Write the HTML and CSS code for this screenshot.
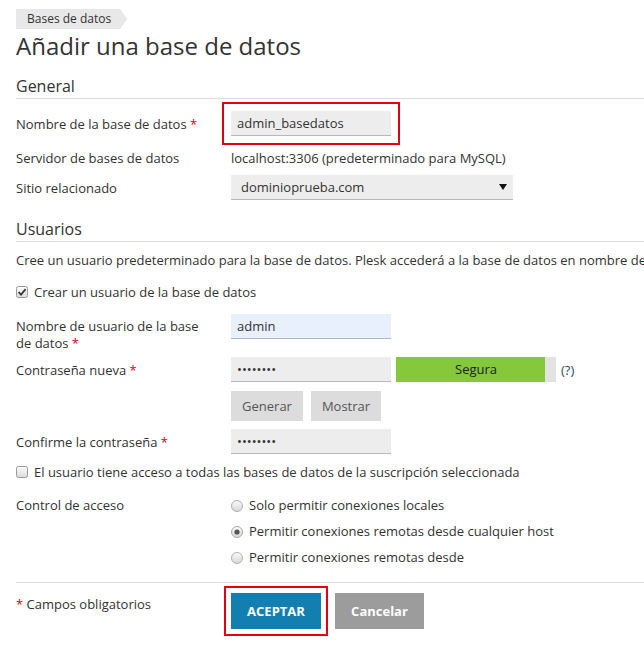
FILE: index.html
```html
<!DOCTYPE html>
<html lang="es">
<head>
<meta charset="utf-8">
<title>Añadir una base de datos</title>
<link rel="stylesheet" href="styles.css">
</head>
<body>
<div class="page">
  <nav class="crumbs"><span class="crumb">Bases de datos</span></nav>
  <h1 class="title">Añadir una base de datos</h1>

  <section class="section">
    <h2 class="section-title">General</h2>
    <div class="row row-db">
      <label class="label" for="dbname">Nombre de la base de datos <span class="req">*</span></label>
      <input id="dbname" class="input marked" type="text" value="admin_basedatos">
    </div>
    <div class="row row-server">
      <span class="label">Servidor de bases de datos</span>
      <span class="value">localhost:3306 (predeterminado para MySQL)</span>
    </div>
    <div class="row row-site">
      <span class="label">Sitio relacionado</span>
      <div class="select">
        <span>dominioprueba.com</span>
        <svg class="caret" width="8" height="6" viewBox="0 0 8 6"><polygon points="0,0 8,0 4,6" fill="#111"/></svg>
      </div>
    </div>
  </section>

  <section class="section">
    <h2 class="section-title users-title">Usuarios</h2>
    <p class="intro">Cree un usuario predeterminado para la base de datos. Plesk accederá a la base de datos en nombre de este usuario.</p>
    <div class="check-row create">
      <svg class="box" width="12" height="12" viewBox="0 0 12 12">
        <defs><linearGradient id="cg" x1="0" y1="0" x2="0" y2="1"><stop offset="0" stop-color="#fdfdfd"/><stop offset="1" stop-color="#d9d9d9"/></linearGradient></defs>
        <rect x="0.5" y="0.5" width="11" height="11" rx="2" fill="url(#cg)" stroke="#9a9a9a"/>
        <path d="M2.6 6.2 L5 8.6 L9.6 3.2" fill="none" stroke="#3a3a3a" stroke-width="1.8"/>
      </svg>
      <span>Crear un usuario de la base de datos</span>
    </div>

    <div class="row row-user">
      <label class="label two-line" for="uname">Nombre de usuario de la base de datos <span class="req">*</span></label>
      <input id="uname" class="input autofill" type="text" value="admin">
    </div>
    <div class="row row-pass">
      <span class="label">Contraseña nueva <span class="req">*</span></span>
      <input class="input" type="text" value="••••••••">
      <div class="meter">Segura</div>
      <span class="help">(?)</span>
    </div>
    <div class="row row-buttons">
      <span class="label"></span>
      <div class="btn-group">
        <button class="btn btn-gen" type="button">Generar</button>
        <button class="btn btn-show" type="button">Mostrar</button>
      </div>
    </div>
    <div class="row row-confirm">
      <span class="label">Confirme la contraseña <span class="req">*</span></span>
      <input class="input" type="text" value="••••••••">
    </div>
    <div class="check-row all-db">
      <svg class="box" width="12" height="12" viewBox="0 0 12 12">
        <defs><linearGradient id="cg2" x1="0" y1="0" x2="0" y2="1"><stop offset="0" stop-color="#fdfdfd"/><stop offset="1" stop-color="#d9d9d9"/></linearGradient></defs>
        <rect x="0.5" y="0.5" width="11" height="11" rx="2" fill="url(#cg2)" stroke="#9a9a9a"/>
      </svg>
      <span>El usuario tiene acceso a todas las bases de datos de la suscripción seleccionada</span>
    </div>
    <div class="row row-access">
      <span class="label">Control de acceso</span>
      <div class="radios">
        <div class="radio">
          <svg width="12" height="12" viewBox="0 0 12 12"><defs><linearGradient id="rg1" x1="0" y1="0" x2="0" y2="1"><stop offset="0" stop-color="#fbfbfb"/><stop offset="1" stop-color="#d6d6d6"/></linearGradient></defs><circle cx="6" cy="6" r="5.5" fill="url(#rg1)" stroke="#b0b0b0"/></svg>
          <span>Solo permitir conexiones locales</span>
        </div>
        <div class="radio">
          <svg width="12" height="12" viewBox="0 0 12 12"><defs><linearGradient id="rg2" x1="0" y1="0" x2="0" y2="1"><stop offset="0" stop-color="#fbfbfb"/><stop offset="1" stop-color="#d6d6d6"/></linearGradient></defs><circle cx="6" cy="6" r="5.5" fill="url(#rg2)" stroke="#a8a8a8"/><circle cx="6" cy="6" r="2.6" fill="#555"/></svg>
          <span>Permitir conexiones remotas desde cualquier host</span>
        </div>
        <div class="radio">
          <svg width="12" height="12" viewBox="0 0 12 12"><defs><linearGradient id="rg3" x1="0" y1="0" x2="0" y2="1"><stop offset="0" stop-color="#fbfbfb"/><stop offset="1" stop-color="#d6d6d6"/></linearGradient></defs><circle cx="6" cy="6" r="5.5" fill="url(#rg3)" stroke="#b0b0b0"/></svg>
          <span>Permitir conexiones remotas desde</span>
        </div>
      </div>
    </div>
  </section>

  <footer class="footer">
    <span class="label required-note"><span class="req">*</span> Campos obligatorios</span>
    <button class="btn-primary" type="button">ACEPTAR</button>
    <button class="btn-cancel" type="button">Cancelar</button>
  </footer>
</div>
</body>
</html>
```

FILE: styles.css
```css
html, body {
  margin: 0;
  padding: 0;
  background: #fff;
  overflow: hidden;
}

body {
  font-family: "Open Sans", "Liberation Sans", sans-serif;
  font-size: 13px;
  line-height: 18px;
  color: #333;
}

.page {
  padding: 9px 0 24px 16px;
}

.crumbs {
  display: flex;
  height: 20px;
}

.crumb {
  display: block;
  height: 20px;
  line-height: 20px;
  font-size: 12px;
  color: #333;
  background: #e8e8e8;
  padding: 0 16px 0 11px;
  clip-path: polygon(0 0, calc(100% - 7px) 0, 100% 50%, calc(100% - 7px) 100%, 0 100%);
}

.title {
  margin: 2px 0 0;
  font-size: 24px;
  line-height: 30px;
  font-weight: 400;
  color: #333;
}

.section-title {
  margin: 14px 0 0;
  padding-bottom: 1px;
  font-size: 16px;
  line-height: 22px;
  font-weight: 400;
  color: #333;
  border-bottom: 1px solid #dcdcdc;
}

.users-title {
  margin-top: 18px;
}

.row {
  display: flex;
  align-items: center;
}

.label {
  flex: none;
  width: 215px;
}

.req {
  color: #d0021b;
}

.row-db { margin-top: 12px; }
.row-server { margin-top: 9px; height: 25px; }
.row-site { margin-top: 5px; }

.input {
  box-sizing: border-box;
  width: 160px;
  height: 25px;
  margin: 0;
  padding: 0 6px;
  border: 0;
  border-bottom: 1px solid #b3b9bf;
  background: #ededed;
  font-family: inherit;
  font-size: 13px;
  color: #333;
  outline: none;
}

.input.marked {
  outline: 2px solid #e3000f;
  outline-offset: 7px;
}

.input.autofill {
  background: #e8f0fe;
}

.select {
  box-sizing: border-box;
  width: 282px;
  height: 25px;
  display: flex;
  align-items: center;
  justify-content: space-between;
  padding: 0 6px 0 10px;
  background: #ededed;
  border-bottom: 1px solid #b3b9bf;
}

.intro {
  margin: 9px 0 0;
  white-space: nowrap;
}

.check-row {
  display: flex;
  align-items: center;
  gap: 6px;
  height: 18px;
}

.check-row .box {
  flex: none;
}

.create { margin-top: 14px; }
.all-db { margin-top: 9px; }

.row-user {
  margin-top: 13px;
  align-items: flex-start;
}

.two-line {
  padding-top: 4px;
  line-height: 17px;
  width: 190px;
  margin-right: 25px;
}

.row-pass { margin-top: 5px; }

.meter {
  box-sizing: border-box;
  width: 160px;
  height: 25px;
  margin-left: 5px;
  line-height: 25px;
  text-align: center;
  color: #222;
  background: linear-gradient(to right, #85c83a 149px, #e3e3e3 149px);
}

.help {
  margin-left: 5px;
  color: #2b4666;
}

.row-buttons { margin-top: 9px; }

.btn-group {
  display: flex;
  gap: 8px;
}

.btn {
  height: 30px;
  margin: 0;
  border: 0;
  background: #dcdcdc;
  color: #555;
  font-family: inherit;
  font-size: 13px;
  padding: 0;
}

.btn-gen { width: 72px; }
.btn-show { width: 70px; }

.row-confirm { margin-top: 8px; }

.row-access {
  margin-top: 15px;
  align-items: flex-start;
}

.radios {
  display: flex;
  flex-direction: column;
  gap: 8px;
}

.radio {
  display: flex;
  align-items: flex-start;
  gap: 6px;
}

.radio svg {
  flex: none;
  margin-top: 4px;
}

.footer {
  display: flex;
  align-items: flex-start;
  margin-top: 16px;
  padding-top: 10px;
  border-top: 1px solid #dcdcdc;
}

.required-note {
  padding-top: 2px;
}

.btn-primary,
.btn-cancel {
  height: 36px;
  margin: 0;
  padding: 0;
  border: 0;
  font-family: inherit;
  font-size: 13px;
  font-weight: 700;
  color: #fff;
}

.btn-primary {
  width: 90px;
  background: #137fb0;
  outline: 2px solid #e3000f;
  outline-offset: 5px;
}

.btn-cancel {
  width: 89px;
  margin-left: 14px;
  background: #9c9c9c;
}
```
